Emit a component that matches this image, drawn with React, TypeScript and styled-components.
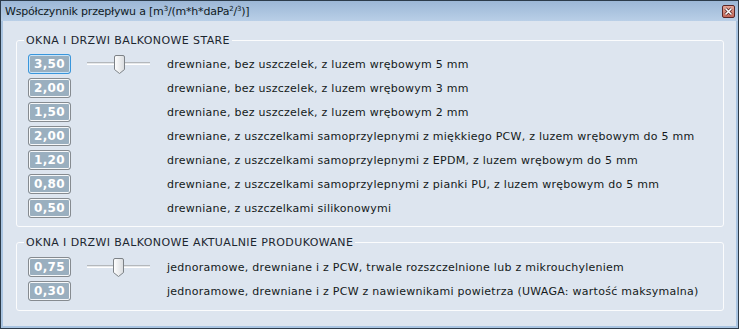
import styled, { createGlobalStyle } from "styled-components";

const GlobalStyle = createGlobalStyle`
  html, body {
    margin: 0;
    padding: 0;
    background: #ffffff;
  }
  body {
    font-family: "DejaVu Sans", Verdana, sans-serif;
  }
`;

const Window = styled.div`
  width: 739px;
  height: 329px;
  box-sizing: border-box;
  border: 1px solid #2c3b4a;
  display: flex;
  flex-direction: column;
  background: #a9c4e1;
`;

const TitleBar = styled.div`
  height: 20px;
  flex-shrink: 0;
  display: flex;
  align-items: center;
  justify-content: space-between;
  padding: 0 3px 0 4px;
  background: linear-gradient(#9cb7d6, #b9cfe7);
  font-size: 11px;
  letter-spacing: -0.2px;
  color: #0f1a24;
  sup {
    font-size: 7px;
    vertical-align: 4px;
    line-height: 0;
  }
`;

const CloseButton = styled.div`
  width: 13px;
  height: 13px;
  box-sizing: border-box;
  border: 1px solid #5a2626;
  border-radius: 2px;
  background: linear-gradient(#e4a698, #c4685a);
  display: flex;
  align-items: center;
  justify-content: center;
`;

const Body = styled.div`
  flex: 1;
  margin: 0 2px 2px;
  background: #dde5ef;
  padding: 13px 12px 0 13px;
  display: flex;
  flex-direction: column;
  gap: 9px;
`;

const Group = styled.fieldset<{ $top: number; $bottom: number }>`
  margin: 0;
  min-width: 0;
  border: 1px solid #fbfcfd;
  border-radius: 3px;
  padding: ${(p) => p.$top}px 0 ${(p) => p.$bottom}px 11px;
  display: flex;
  flex-direction: column;
  gap: 4px;
`;

const Legend = styled.legend`
  margin-left: -4px;
  padding: 0 2px;
  font-size: 11px;
  line-height: 13px;
  letter-spacing: 0.4px;
  color: #1c2630;
`;

const Row = styled.div`
  display: grid;
  grid-template-columns: 43px 63px 1fr;
  column-gap: 16px;
  align-items: center;
  height: 20px;
`;

const Badge = styled.div<{ $active?: boolean }>`
  width: 43px;
  height: 20px;
  box-sizing: border-box;
  border: 1px solid ${(p) => (p.$active ? "#3996dc" : "#868b90")};
  border-radius: 3px;
  box-shadow: inset 0 0 0 1px ${(p) => (p.$active ? "#c9e4f8" : "#f6f8fa")};
  background: #9aafbf;
  color: #ffffff;
  font-weight: bold;
  font-size: 12px;
  letter-spacing: 0.4px;
  display: flex;
  align-items: center;
  justify-content: center;
`;

const Slider = styled.div`
  position: relative;
  width: 63px;
  height: 20px;
`;

const Track = styled.div`
  position: absolute;
  left: 0;
  right: 0;
  top: 8px;
  height: 3px;
  box-sizing: border-box;
  border-top: 1px solid #b4b8bc;
  border-bottom: 1px solid #ffffff;
  background: #e6e8ea;
`;

const Thumb = styled.svg`
  position: absolute;
  top: 1px;
`;

const Label = styled.span`
  margin-left: 1px;
  font-size: 11px;
  letter-spacing: 0.26px;
  color: #141a20;
  white-space: nowrap;
`;

type Item = { value: string; label: string };

const oldItems: Item[] = [
  { value: "3,50", label: "drewniane, bez uszczelek, z luzem wrębowym 5 mm" },
  { value: "2,00", label: "drewniane, bez uszczelek, z luzem wrębowym 3 mm" },
  { value: "1,50", label: "drewniane, bez uszczelek, z luzem wrębowym 2 mm" },
  {
    value: "2,00",
    label:
      "drewniane, z uszczelkami samoprzylepnymi z miękkiego PCW, z luzem wrębowym do 5 mm",
  },
  {
    value: "1,20",
    label: "drewniane, z uszczelkami samoprzylepnymi z EPDM, z luzem wrębowym do 5 mm",
  },
  {
    value: "0,80",
    label: "drewniane, z uszczelkami samoprzylepnymi z pianki PU, z luzem wrębowym do 5 mm",
  },
  { value: "0,50", label: "drewniane, z uszczelkami silikonowymi" },
];

const newItems: Item[] = [
  {
    value: "0,75",
    label:
      "jednoramowe, drewniane i z PCW, trwale rozszczelnione lub z mikrouchyleniem",
  },
  {
    value: "0,30",
    label:
      "jednoramowe, drewniane i z PCW z nawiewnikami powietrza (UWAGA: wartość maksymalna)",
  },
];

function SliderControl({ pos }: { pos: number }) {
  // pos: 0..1 along the track
  const left = Math.round(pos * (63 - 11));
  return (
    <Slider>
      <Track />
      <Thumb width="11" height="19" viewBox="0 0 11 19" style={{ left }}>
        <defs>
          <linearGradient id="thumbFill" x1="0" y1="0" x2="1" y2="0">
            <stop offset="0" stopColor="#ffffff" />
            <stop offset="1" stopColor="#d9dcdf" />
          </linearGradient>
        </defs>
        <path
          d="M2 0.5h7a1.5 1.5 0 0 1 1.5 1.5v12.5l-5 4l-5 -4v-12.5a1.5 1.5 0 0 1 1.5 -1.5z"
          fill="url(#thumbFill)"
          stroke="#7d8287"
        />
      </Thumb>
    </Slider>
  );
}

function Rows({ items, sliderPos }: { items: Item[]; sliderPos: number }) {
  return (
    <>
      {items.map((it, i) => (
        <Row key={i}>
          <Badge $active={i === 0 && sliderPos > 0.5}>{it.value}</Badge>
          {i === 0 ? <SliderControl pos={sliderPos} /> : <span />}
          <Label>{it.label}</Label>
        </Row>
      ))}
    </>
  );
}

export default function App() {
  return (
    <>
      <GlobalStyle />
      <Window>
        <TitleBar>
          <span>
            Współczynnik przepływu a [m<sup>3</sup>/(m*h*daPa<sup>2</sup>/<sup>3</sup>)]
          </span>
          <CloseButton>
            <svg width="9" height="9" viewBox="0 0 9 9">
              <path d="M1.5 1.5l6 6M7.5 1.5l-6 6" stroke="#4a1c1c" strokeWidth="3" />
              <path d="M1.5 1.5l6 6M7.5 1.5l-6 6" stroke="#ffffff" strokeWidth="1.6" />
            </svg>
          </CloseButton>
        </TitleBar>
        <Body>
          <Group $top={7} $bottom={8}>
            <Legend>OKNA I DRZWI BALKONOWE STARE</Legend>
            <Rows items={oldItems} sliderPos={0.52} />
          </Group>
          <Group $top={8} $bottom={9}>
            <Legend>OKNA I DRZWI BALKONOWE AKTUALNIE PRODUKOWANE</Legend>
            <Rows items={newItems} sliderPos={0.5} />
          </Group>
        </Body>
      </Window>
    </>
  );
}
